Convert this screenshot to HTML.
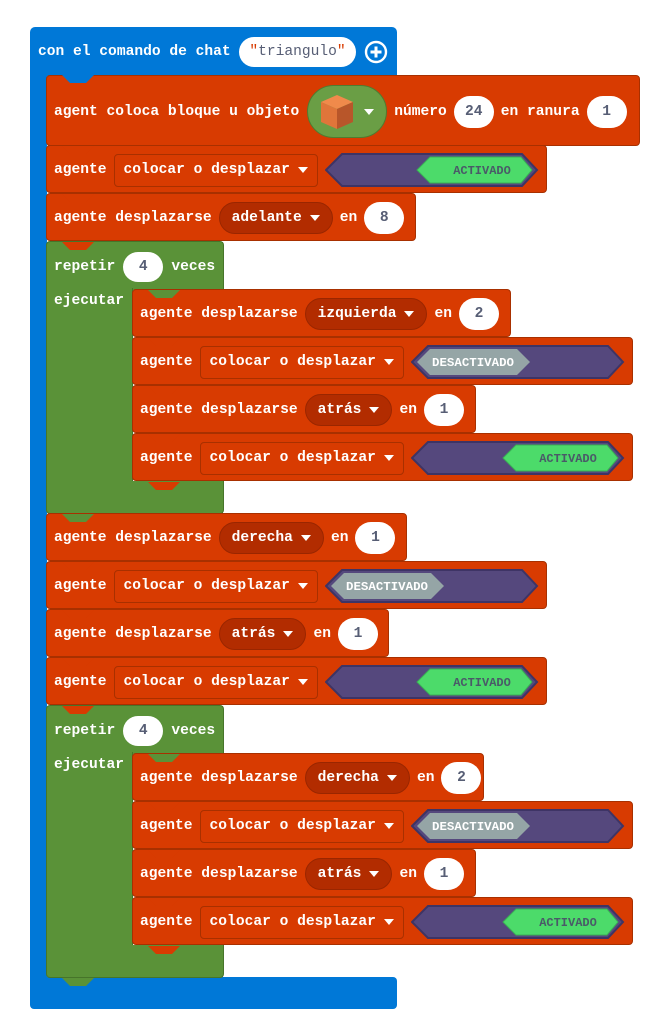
<!DOCTYPE html>
<html><head><meta charset="utf-8"><style>
*{box-sizing:border-box;margin:0;padding:0}
body{width:669px;height:1035px;background:#fff;position:relative;overflow:hidden;font-family:"Liberation Mono",monospace;font-weight:bold;font-size:14.6px;color:#fff}
.a{position:absolute}
.blue{background:#0078D7}
.r{position:absolute;background:#D83B01;border:1px solid #A83000;border-radius:4px;height:48px;display:flex;align-items:center;padding-left:7px;gap:7px;white-space:nowrap;padding-top:2px}
.g{position:absolute;background:#5A9238;border:1px solid #46752a}
.dd{border:1px solid #A83000;border-radius:4px;height:33px;display:flex;align-items:center;padding:0 9px}
.pill{background:#B22C00;border:1px solid #9a2600;border-radius:16px;height:32px;display:flex;align-items:center;padding:0 12px}
.num{background:#fff;color:#575E75;border-radius:16px;height:32px;min-width:40px;display:flex;align-items:center;justify-content:center;padding:0 10px}
.tri{display:inline-block;width:0;height:0;border-left:5px solid transparent;border-right:5px solid transparent;border-top:6px solid #fff;margin-left:8px}
.tab{position:absolute;width:32px;height:8px;clip-path:polygon(0 0,100% 0,75% 100%,25% 100%);z-index:5}
svg text{font-family:"Liberation Mono",monospace}
</style></head><body>
<div class="a blue" style="left:30px;top:27px;width:367px;height:49px;border-radius:5px 5px 0 0"></div>
<div class="a blue" style="left:30px;top:60px;width:17px;height:930px"></div>
<div class="a blue" style="left:30px;top:977px;width:367px;height:32px;border-radius:0 4px 4px 4px"></div>
<div class="a" style="left:38px;top:42px;line-height:20px">con el comando de chat</div>
<div class="a" style="left:239px;top:37px;width:117px;height:30px;background:#fff;border-radius:15px;color:#575E75;font-weight:normal;display:flex;align-items:center;justify-content:center"><span style="color:#D83B01">"</span>triangulo<span style="color:#D83B01">"</span></div>
<svg class="a" style="left:364px;top:40px" width="24" height="24"><circle cx="12" cy="12" r="10" fill="none" stroke="#fff" stroke-width="2.4"/><path d="M12 6.5v11M6.5 12h11" stroke="#fff" stroke-width="3"/></svg>

<div class="r" style="left:46px;top:75px;width:594px;height:71px">agent coloca bloque u objeto
<div style="width:80px;height:53px;background:#6A9E45;border:1px solid #4f7c30;border-radius:27px;position:relative;margin-left:1px">
<svg class="a" style="left:12px;top:8px" width="34" height="36"><polygon points="17,1 33,8 17,15 1,8" fill="#F08A4B"/><polygon points="1,8 17,15 17,35 1,28" fill="#E0753A"/><polygon points="17,15 33,8 33,28 17,35" fill="#B8562A"/></svg>
<span class="tri a" style="left:48px;top:23px"></span></div>
número <div class="num">24</div> en ranura <div class="num">1</div></div>

<div class="r" style="left:46px;top:145px;width:501px">agente <div class="dd">colocar o desplazar<span class="tri"></span></div>
<svg width="214" height="36"><polygon points="1,18 17,2 197,2 212,18 197,34 17,34" fill="#55487D" stroke="#3E3465" stroke-width="2"/><polygon points="92,18 105,5 196,5 207,18 196,31 105,31" fill="#4CDB6A" stroke="#3AB055"/><text x="157" y="22" font-size="12" fill="#4a5a68" text-anchor="middle">ACTIVADO</text></svg></div>

<div class="r" style="left:46px;top:193px;width:370px">agente desplazarse <div class="pill">adelante<span class="tri"></span></div> en <div class="num">8</div></div>

<div class="g" style="left:46px;top:241px;width:178px;height:49px;border-radius:4px 4px 0 0;border-bottom:none"></div>
<div class="g" style="left:46px;top:288px;width:87px;height:195px;border-top:none;border-bottom:none"></div>
<div class="g" style="left:46px;top:481px;width:178px;height:33px;border-radius:0 0 4px 4px;border-top:none"></div>
<div class="a" style="left:54px;top:252px;display:flex;align-items:center;gap:8px">repetir <div class="num" style="height:30px">4</div> veces</div>
<div class="a" style="left:54px;top:293px">ejecutar</div>

<div class="r" style="left:132px;top:289px;width:379px">agente desplazarse <div class="pill">izquierda<span class="tri"></span></div> en <div class="num">2</div></div>
<div class="r" style="left:132px;top:337px;width:501px">agente <div class="dd">colocar o desplazar<span class="tri"></span></div>
<svg width="214" height="36"><polygon points="1,18 17,2 197,2 212,18 197,34 17,34" fill="#55487D" stroke="#3E3465" stroke-width="2"/><polygon points="6,18 19,5 106,5 119,18 106,31 19,31" fill="#95A5A6"/><text x="62" y="22" font-size="12" font-weight="bold" fill="#fff" text-anchor="middle" textLength="82" lengthAdjust="spacingAndGlyphs">DESACTIVADO</text></svg></div>
<div class="r" style="left:132px;top:385px;width:344px">agente desplazarse <div class="pill">atrás<span class="tri"></span></div> en <div class="num">1</div></div>
<div class="r" style="left:132px;top:433px;width:501px">agente <div class="dd">colocar o desplazar<span class="tri"></span></div>
<svg width="214" height="36"><polygon points="1,18 17,2 197,2 212,18 197,34 17,34" fill="#55487D" stroke="#3E3465" stroke-width="2"/><polygon points="92,18 105,5 196,5 207,18 196,31 105,31" fill="#4CDB6A" stroke="#3AB055"/><text x="157" y="22" font-size="12" fill="#4a5a68" text-anchor="middle">ACTIVADO</text></svg></div>

<div class="r" style="left:46px;top:513px;width:361px">agente desplazarse <div class="pill">derecha<span class="tri"></span></div> en <div class="num">1</div></div>
<div class="r" style="left:46px;top:561px;width:501px">agente <div class="dd">colocar o desplazar<span class="tri"></span></div>
<svg width="214" height="36"><polygon points="1,18 17,2 197,2 212,18 197,34 17,34" fill="#55487D" stroke="#3E3465" stroke-width="2"/><polygon points="6,18 19,5 106,5 119,18 106,31 19,31" fill="#95A5A6"/><text x="62" y="22" font-size="12" font-weight="bold" fill="#fff" text-anchor="middle" textLength="82" lengthAdjust="spacingAndGlyphs">DESACTIVADO</text></svg></div>
<div class="r" style="left:46px;top:609px;width:343px">agente desplazarse <div class="pill">atrás<span class="tri"></span></div> en <div class="num">1</div></div>
<div class="r" style="left:46px;top:657px;width:501px">agente <div class="dd">colocar o desplazar<span class="tri"></span></div>
<svg width="214" height="36"><polygon points="1,18 17,2 197,2 212,18 197,34 17,34" fill="#55487D" stroke="#3E3465" stroke-width="2"/><polygon points="92,18 105,5 196,5 207,18 196,31 105,31" fill="#4CDB6A" stroke="#3AB055"/><text x="157" y="22" font-size="12" fill="#4a5a68" text-anchor="middle">ACTIVADO</text></svg></div>

<div class="g" style="left:46px;top:705px;width:178px;height:49px;border-radius:4px 4px 0 0;border-bottom:none"></div>
<div class="g" style="left:46px;top:752px;width:87px;height:195px;border-top:none;border-bottom:none"></div>
<div class="g" style="left:46px;top:945px;width:178px;height:33px;border-radius:0 0 4px 4px;border-top:none"></div>
<div class="a" style="left:54px;top:716px;display:flex;align-items:center;gap:8px">repetir <div class="num" style="height:30px">4</div> veces</div>
<div class="a" style="left:54px;top:757px">ejecutar</div>

<div class="r" style="left:132px;top:753px;width:352px">agente desplazarse <div class="pill">derecha<span class="tri"></span></div> en <div class="num">2</div></div>
<div class="r" style="left:132px;top:801px;width:501px">agente <div class="dd">colocar o desplazar<span class="tri"></span></div>
<svg width="214" height="36"><polygon points="1,18 17,2 197,2 212,18 197,34 17,34" fill="#55487D" stroke="#3E3465" stroke-width="2"/><polygon points="6,18 19,5 106,5 119,18 106,31 19,31" fill="#95A5A6"/><text x="62" y="22" font-size="12" font-weight="bold" fill="#fff" text-anchor="middle" textLength="82" lengthAdjust="spacingAndGlyphs">DESACTIVADO</text></svg></div>
<div class="r" style="left:132px;top:849px;width:344px">agente desplazarse <div class="pill">atrás<span class="tri"></span></div> en <div class="num">1</div></div>
<div class="r" style="left:132px;top:897px;width:501px">agente <div class="dd">colocar o desplazar<span class="tri"></span></div>
<svg width="214" height="36"><polygon points="1,18 17,2 197,2 212,18 197,34 17,34" fill="#55487D" stroke="#3E3465" stroke-width="2"/><polygon points="92,18 105,5 196,5 207,18 196,31 105,31" fill="#4CDB6A" stroke="#3AB055"/><text x="157" y="22" font-size="12" fill="#4a5a68" text-anchor="middle">ACTIVADO</text></svg></div>

<div class="tab" style="left:62px;top:75px;background:#0078D7"></div>
<div class="tab" style="left:62px;top:146px;background:#D83B01"></div>
<div class="tab" style="left:62px;top:194px;background:#D83B01"></div>
<div class="tab" style="left:62px;top:242px;background:#D83B01"></div>
<div class="tab" style="left:148px;top:290px;background:#5A9238"></div>
<div class="tab" style="left:148px;top:338px;background:#D83B01"></div>
<div class="tab" style="left:148px;top:386px;background:#D83B01"></div>
<div class="tab" style="left:148px;top:434px;background:#D83B01"></div>
<div class="tab" style="left:148px;top:482px;background:#D83B01"></div>
<div class="tab" style="left:62px;top:514px;background:#5A9238"></div>
<div class="tab" style="left:62px;top:562px;background:#D83B01"></div>
<div class="tab" style="left:62px;top:610px;background:#D83B01"></div>
<div class="tab" style="left:62px;top:658px;background:#D83B01"></div>
<div class="tab" style="left:62px;top:706px;background:#D83B01"></div>
<div class="tab" style="left:148px;top:754px;background:#5A9238"></div>
<div class="tab" style="left:148px;top:802px;background:#D83B01"></div>
<div class="tab" style="left:148px;top:850px;background:#D83B01"></div>
<div class="tab" style="left:148px;top:898px;background:#D83B01"></div>
<div class="tab" style="left:148px;top:946px;background:#D83B01"></div>
<div class="tab" style="left:62px;top:978px;background:#5A9238"></div>
</body></html>
